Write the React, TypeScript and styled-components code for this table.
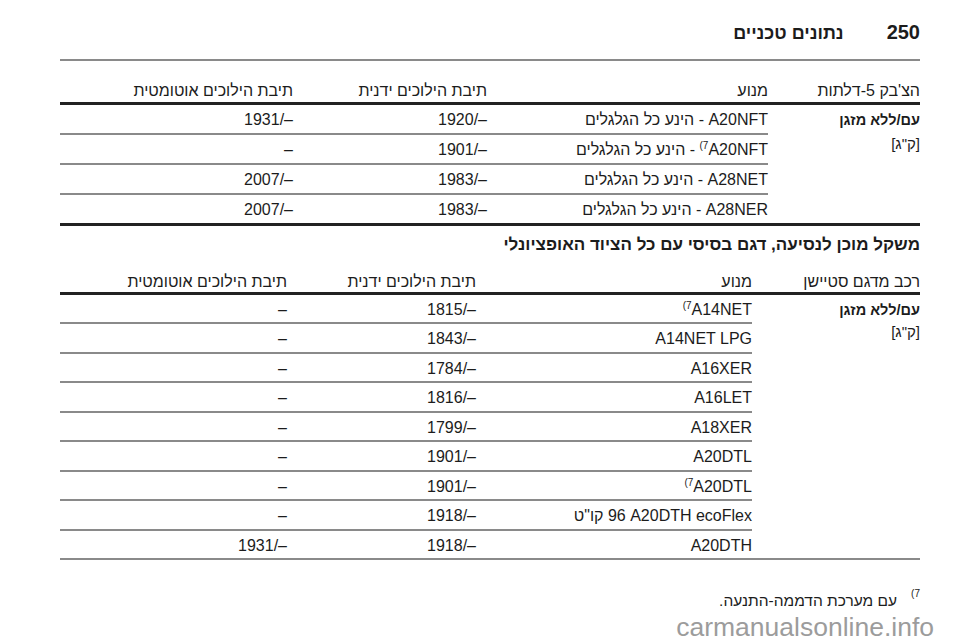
import styled, { createGlobalStyle } from "styled-components"

interface Row {
    engine: React.ReactNode
    manual: string
    auto: string
}

interface SpecTableProps {
    cols: number[]
    headers: string[]
    rows: Row[]
    rowHeight: number
    headHeight: number
    headPad: number
    labelLine: number
    heavyBottom?: boolean
}

const GlobalStyle = createGlobalStyle`
    body {
        margin: 0;
        background: #fff;
        font-family: "Liberation Sans", Arial, "DejaVu Sans", sans-serif;
        color: #1c1c1c;
    }
`

const ALL_WHEELS = "הינע כל הגלגלים"

// built lazily so the styled Sup below already exists
const tableOne = (): Row[] => [
    { engine: `A20NFT - ${ALL_WHEELS}`, manual: "–/1920", auto: "–/1931" },
    { engine: <>A20NFT<Sup>7)</Sup> - {ALL_WHEELS}</>, manual: "–/1901", auto: "–" },
    { engine: `A28NET - ${ALL_WHEELS}`, manual: "–/1983", auto: "–/2007" },
    { engine: `A28NER - ${ALL_WHEELS}`, manual: "–/1983", auto: "–/2007" },
]

const tableTwo = (): Row[] => [
    { engine: <>A14NET<Sup>7)</Sup></>, manual: "–/1815", auto: "–" },
    { engine: "A14NET LPG", manual: "–/1843", auto: "–" },
    { engine: "A16XER", manual: "–/1784", auto: "–" },
    { engine: "A16LET", manual: "–/1816", auto: "–" },
    { engine: "A18XER", manual: "–/1799", auto: "–" },
    { engine: "A20DTL", manual: "–/1901", auto: "–" },
    { engine: <>A20DTL<Sup>7)</Sup></>, manual: "–/1901", auto: "–" },
    { engine: "A20DTH ecoFlex\u200F 96 קו\"ט", manual: "–/1918", auto: "–" },
    { engine: "A20DTH", manual: "–/1918", auto: "–/1931" },
]

const SpecTable = ({ cols, headers, rows, rowHeight, headHeight, headPad, labelLine, heavyBottom }: SpecTableProps) => {
    const template = `${cols[0]}px ${cols[1]}px ${cols[2]}px 1fr`
    const inner = `${cols[1]}px ${cols[2]}px 1fr`

    return (
        <Table $heavy={heavyBottom}>
            <HeadRow style={{ gridTemplateColumns: template, height: headHeight, paddingBottom: headPad }}>
                {headers.map((h) => (
                    <HeadCell key={h}>{h}</HeadCell>
                ))}
            </HeadRow>
            <Body style={{ gridTemplateColumns: `${cols[0]}px 1fr` }}>
                <Label style={{ lineHeight: `${labelLine}px` }}>
                    <LabelTitle>עם/ללא מזגן</LabelTitle>
                    <span>[ק"ג]</span>
                </Label>
                <Rows>
                    {rows.map((r, i) => (
                        <DataRow key={i} style={{ gridTemplateColumns: inner, height: rowHeight }}>
                            <Cell>{r.engine}</Cell>
                            <Cell>{r.manual}</Cell>
                            <Cell>{r.auto}</Cell>
                        </DataRow>
                    ))}
                </Rows>
            </Body>
        </Table>
    )
}

const App = () => {
    return (
        <Page dir="rtl">
            <GlobalStyle />
            <Header>
                <PageNum>250</PageNum>
                <Chapter>נתונים טכניים</Chapter>
            </Header>

            <SpecTable
                cols={[152, 281, 194]}
                headers={["הצ'בק 5-דלתות", "מנוע", "תיבת הילוכים ידנית", "תיבת הילוכים אוטומטית"]}
                rows={tableOne()}
                rowHeight={28}
                headHeight={44}
                headPad={2}
                labelLine={23}
                heavyBottom
            />

            <SectionTitle>משקל מוכן לנסיעה, דגם בסיסי עם כל הציוד האופציונלי</SectionTitle>

            <SpecTable
                cols={[168, 276, 189]}
                headers={["רכב מדגם סטיישן", "מנוע", "תיבת הילוכים ידנית", "תיבת הילוכים אוטומטית"]}
                rows={tableTwo()}
                rowHeight={27.5}
                headHeight={40}
                headPad={1}
                labelLine={22}
            />

            <Footnote>
                <FootMark>7)</FootMark>
                <span>עם מערכת הדממה-התנעה.</span>
            </Footnote>

            <Watermark dir="ltr">carmanualsonline.info</Watermark>
        </Page>
    )
}

export default App

const Page = styled.div`
    width: 960px;
    height: 642px;
    box-sizing: border-box;
    padding: 0 40px 0 60px;
    overflow: hidden;
    display: flex;
    flex-direction: column;
`

const Header = styled.div`
    display: flex;
    align-items: baseline;
    gap: 43px;
    height: 62px;
    padding-top: 21px;
    box-sizing: border-box;
    border-bottom: 2px solid #8a8a8a;
    font-weight: 700;
    font-size: 18px;
`

const PageNum = styled.span`
    font-size: 20px;
`

const Chapter = styled.span``

const Table = styled.div<{ $heavy?: boolean }>`
    border-bottom: ${(p) => (p.$heavy ? "3px solid #222" : "2px solid #8a8a8a")};
    font-size: 16px;
`

const HeadRow = styled.div`
    display: grid;
    align-items: end;
    box-sizing: border-box;
    border-bottom: 3px solid #222;
    line-height: 18px;
`

const HeadCell = styled.div`
    white-space: nowrap;
`

const Body = styled.div`
    display: grid;
`

const Label = styled.div`
    display: flex;
    flex-direction: column;
    padding-top: 4px;
    font-size: 15px;
`

const LabelTitle = styled.span`
    font-weight: 700;
    font-size: 14.5px;
`

const Rows = styled.div`
    display: flex;
    flex-direction: column;
`

const DataRow = styled.div`
    display: grid;
    align-items: center;
    box-sizing: content-box;
    border-bottom: 2px solid #8a8a8a;

    &:last-child {
        border-bottom: none;
    }
`

const Cell = styled.div`
    white-space: nowrap;
    line-height: 18px;
    margin-top: 3px;
`

const Sup = styled.span`
    unicode-bidi: isolate;
    font-size: 10px;
    vertical-align: 6px;
    line-height: 0;
`

const SectionTitle = styled.div`
    font-weight: 700;
    font-size: 17px;
    line-height: 20px;
    padding-top: 9px;
`

const Footnote = styled.div`
    display: flex;
    gap: 14px;
    margin-top: 32px;
    font-size: 15.5px;
    line-height: 18px;
`

const FootMark = styled.span`
    font-size: 10px;
    line-height: 10px;
    margin-top: -3px;
    unicode-bidi: isolate;
`

const Watermark = styled.div`
    align-self: flex-start;
    margin-right: -14px;
    font-size: 26.5px;
    line-height: 30px;
    color: #9c9c9c;
    margin-top: 2px;
`
